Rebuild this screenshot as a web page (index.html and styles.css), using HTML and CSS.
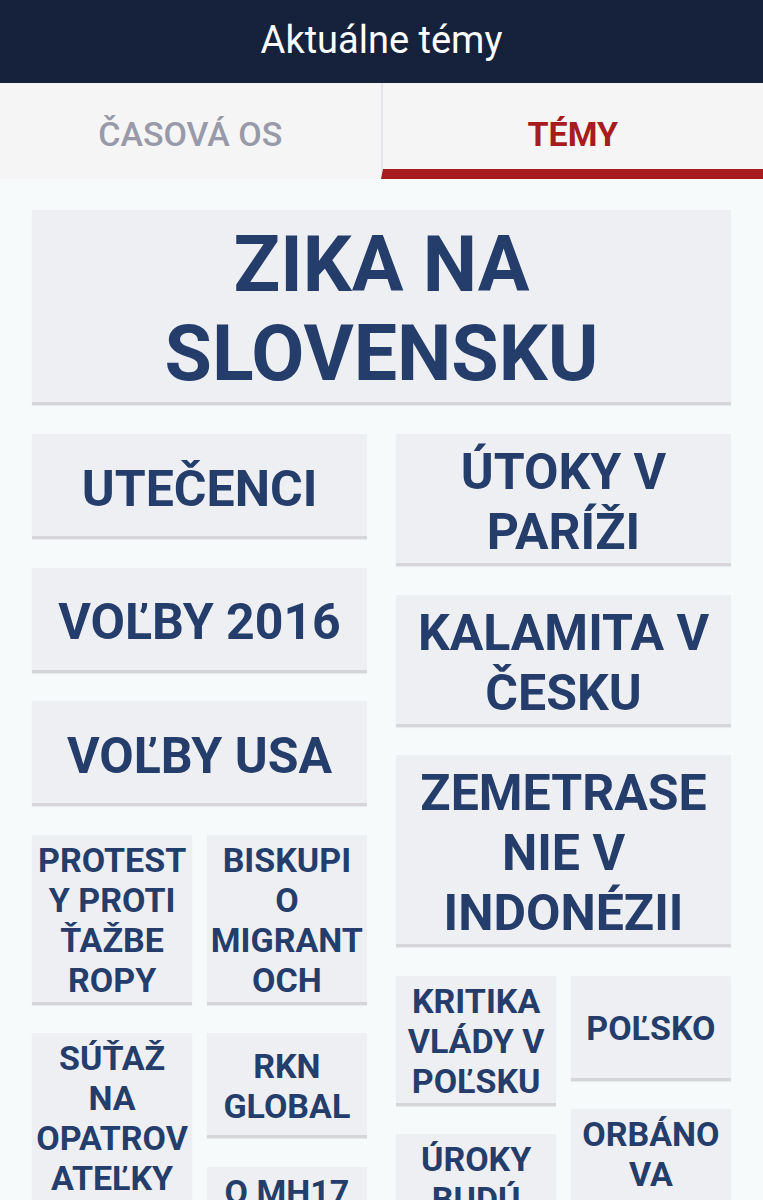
FILE: index.html
```html
<!DOCTYPE html>
<html lang="sk">
<head>
    <meta charset="UTF-8">
    <meta name="viewport" content="width=device-width, initial-scale=1.0">
    <title>Aktuálne témy</title>
    <link rel="stylesheet" href="styles.css">
</head>
<body>
    <header class="app-bar">Aktuálne témy</header>

    <nav class="tabs">
        <a class="tab" href="#">ČASOVÁ OS</a>
        <a class="tab active" href="#">TÉMY</a>
    </nav>

    <main class="topics">
        <a class="tile tile-xl" href="#">ZIKA NA SLOVENSKU</a>

        <div class="columns">
            <div class="col">
                <a class="tile" href="#">UTEČENCI</a>
                <a class="tile" href="#">VOĽBY 2016</a>
                <a class="tile" href="#">VOĽBY USA</a>
                <div class="sub">
                    <div class="col">
                        <a class="tile tile-sm" href="#">PROTESTY PROTI ŤAŽBE ROPY</a>
                        <a class="tile tile-sm" href="#">SÚŤAŽ NA OPATROVATEĽKY</a>
                    </div>
                    <div class="col">
                        <a class="tile tile-sm" href="#">BISKUPI O MIGRANTOCH</a>
                        <a class="tile tile-sm" href="#">RKN GLOBAL</a>
                        <a class="tile tile-sm" href="#">O MH17 VYŠETROVANIE</a>
                    </div>
                </div>
            </div>

            <div class="col">
                <a class="tile" href="#">ÚTOKY V PARÍŽI</a>
                <a class="tile" href="#">KALAMITA V ČESKU</a>
                <a class="tile" href="#">ZEMETRASENIE V INDONÉZII</a>
                <div class="sub">
                    <div class="col">
                        <a class="tile tile-sm" href="#">KRITIKA VLÁDY V POĽSKU</a>
                        <a class="tile tile-sm" href="#">ÚROKY BUDÚ RÁSŤ</a>
                    </div>
                    <div class="col">
                        <a class="tile tile-sm" href="#">POĽSKO</a>
                        <a class="tile tile-sm" href="#">ORBÁNOVA POLITIKA</a>
                    </div>
                </div>
            </div>
        </div>
    </main>
</body>
</html>
```

FILE: styles.css
```css
body { margin: 0; font-family: Roboto, "Liberation Sans", sans-serif; background: #f7fafa; }
a { text-decoration: none; }

.app-bar { height: 83px; box-sizing: border-box; padding-top: 18px; background: #16223c; color: #fff; font-size: 38px; text-align: center; }

.tabs { display: flex; background: #f5f5f5; }
.tab { flex: 1; height: 96px; box-sizing: border-box; padding-top: 31px; text-align: center; font-size: 34px; font-weight: 500; color: #9899a9; border-bottom: 10px solid transparent; }
.tab + .tab { border-left: 2px solid #e4e4ea; }
.tab.active { color: #a61c1f; font-weight: 700; border-bottom-color: #a61c1f; }

.topics { padding: 31px 32px 0; }

/* tiles: flat cards with a thin shadow line under them */
.tile { display: flex; align-items: center; justify-content: center; box-sizing: border-box; min-height: 105px; padding: 8px 8px 1px; background: #eeeff3; border-bottom: 3px solid #d5d5da; box-shadow: 0 1px 1px rgba(0,0,0,0.06); color: #243d6b; font-weight: 700; font-size: 50px; line-height: 60px; text-align: center; overflow-wrap: anywhere; }
.tile-xl { padding: 11px 10px 3px; font-size: 77px; line-height: 89px; margin-bottom: 29px; }
.tile-sm { padding: 5px 4px 2px; font-size: 34px; line-height: 40px; }

.columns { display: grid; grid-template-columns: 1fr 1fr; column-gap: 29px; align-items: start; }
.col { display: flex; flex-direction: column; gap: 28.5px; min-width: 0; }
.sub { display: grid; grid-template-columns: 1fr 1fr; column-gap: 14.5px; align-items: start; }
```
